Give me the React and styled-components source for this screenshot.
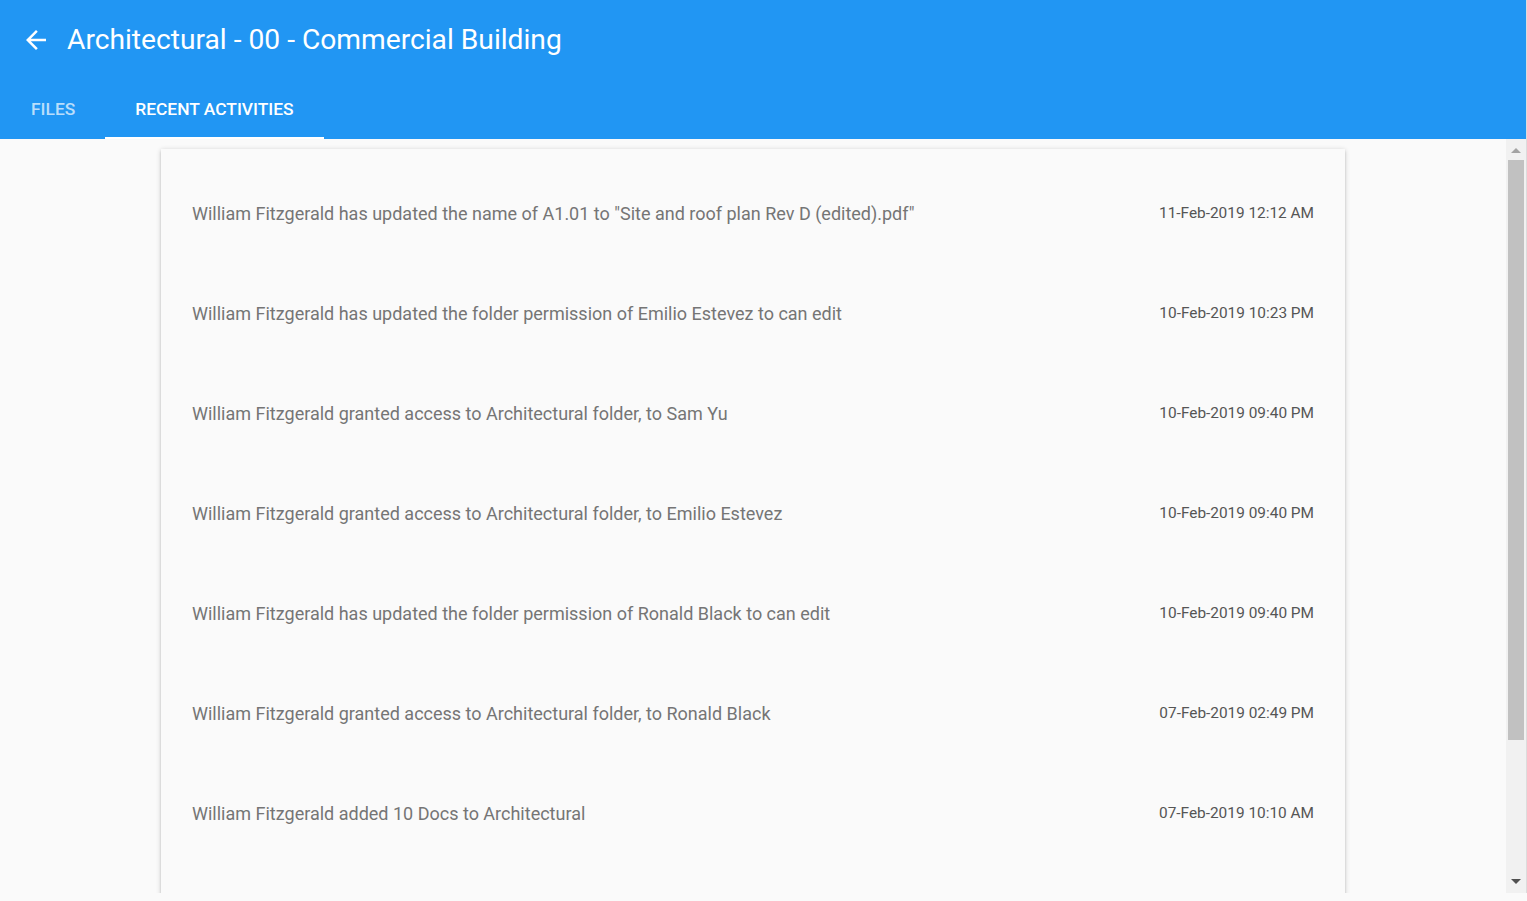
import React, { useState } from "react";
import styled, { createGlobalStyle } from "styled-components";

const GlobalStyle = createGlobalStyle`
  html, body {
    margin: 0;
    padding: 0;
    background: #fafafa;
    font-family: Roboto, "Noto Sans", Arial, sans-serif;
  }
  * { box-sizing: border-box; }
`;

const Page = styled.div`
  display: flex;
  flex-direction: column;
  height: 893px;
  border-right: 1px solid #dcdcdc;
  background: #fafafa;
`;

const Header = styled.header`
  background: #2196f3;
  color: #fff;
  display: flex;
  flex-direction: column;
`;

const Toolbar = styled.div`
  display: flex;
  align-items: center;
  height: 79px;
  padding: 0 0 0 21px;
  gap: 16px;
`;

const BackButton = styled.button`
  display: flex;
  align-items: center;
  justify-content: center;
  width: 30px;
  height: 30px;
  padding: 0;
  border: 0;
  background: transparent;
  cursor: pointer;
`;

const Title = styled.h1`
  margin: 0;
  font-size: 28.2px;
  font-weight: 400;
`;

const Tabs = styled.nav`
  display: flex;
  height: 60px;
  padding-left: 1px;
`;

const Tab = styled.button`
  height: 100%;
  padding: 0 30px;
  border: 0;
  background: transparent;
  font-family: inherit;
  font-size: 17.4px;
  font-weight: 500;
  text-transform: uppercase;
  color: ${(p) => (p.active ? "#fff" : "rgba(255,255,255,0.7)")};
  cursor: pointer;
  box-shadow: ${(p) => (p.active ? "inset 0 -2px 0 #fff" : "none")};
`;

const Body = styled.div`
  flex: 1;
  display: flex;
  min-height: 0;
`;

const Scroller = styled.main`
  flex: 1;
  overflow: hidden;
  padding: 10px 0;
`;

const Scrollbar = styled.div`
  width: 20px;
  display: flex;
  flex-direction: column;
  background: #f1f1f1;
`;

const ScrollButton = styled.div`
  height: 20px;
  display: flex;
  align-items: center;
  justify-content: center;
  padding: ${(p) => (p.up ? "2px 0 0" : "0 0 4px")};
`;

const Arrow = styled.span`
  width: 0;
  height: 0;
  border-left: 5px solid transparent;
  border-right: 5px solid transparent;
  ${(p) =>
    p.up
      ? "border-bottom: 5px solid #a3a3a3;"
      : "border-top: 5px solid #505050;"}
`;

const Track = styled.div`
  flex: 1;
  padding: 1px 2px 0;
`;

const Thumb = styled.div`
  background: #c1c1c1;
`;

const Card = styled.section`
  width: 1184px;
  margin: 0 auto;
  padding: 14px 31px;
  background: #fafafa;
  box-shadow: 0 1px 5px rgba(0, 0, 0, 0.2), 0 2px 2px rgba(0, 0, 0, 0.12);
`;

const Row = styled.div`
  display: flex;
  align-items: center;
  justify-content: space-between;
  height: 100px;
`;

const Message = styled.span`
  font-size: 18px;
  color: #757575;
`;

const Stamp = styled.span`
  font-size: 15.4px;
  color: #555;
  white-space: nowrap;
`;

const activities = [
  ['William Fitzgerald has updated the name of A1.01 to "Site and roof plan Rev D (edited).pdf"', "11-Feb-2019 12:12 AM"],
  ["William Fitzgerald has updated the folder permission of Emilio Estevez to can edit", "10-Feb-2019 10:23 PM"],
  ["William Fitzgerald granted access to Architectural folder, to Sam Yu", "10-Feb-2019 09:40 PM"],
  ["William Fitzgerald granted access to Architectural folder, to Emilio Estevez", "10-Feb-2019 09:40 PM"],
  ["William Fitzgerald has updated the folder permission of Ronald Black to can edit", "10-Feb-2019 09:40 PM"],
  ["William Fitzgerald granted access to Architectural folder, to Ronald Black", "07-Feb-2019 02:49 PM"],
  ["William Fitzgerald added 10 Docs to Architectural", "07-Feb-2019 10:10 AM"],
];

export default function App() {
  const [tab, setTab] = useState("recent");
  // the list runs past the bottom edge; thumb = visible share of the track
  const thumbHeight = 580;
  return (
    <Page>
      <GlobalStyle />
      <Header>
        <Toolbar>
          <BackButton aria-label="Back">
            <svg width="30" height="30" viewBox="0 0 24 24">
              <path fill="#fff" d="M20 11H7.83l5.59-5.59L12 4l-8 8 8 8 1.41-1.41L7.83 13H20v-2z" />
            </svg>
          </BackButton>
          <Title>Architectural - 00 - Commercial Building</Title>
        </Toolbar>
        <Tabs>
          <Tab active={tab === "files"} onClick={() => setTab("files")}>Files</Tab>
          <Tab active={tab === "recent"} onClick={() => setTab("recent")}>Recent Activities</Tab>
        </Tabs>
      </Header>
      <Body>
        <Scroller>
          <Card>
            {activities.map(([text, date], i) => (
              <Row key={i}>
                <Message>{text}</Message>
                <Stamp>{date}</Stamp>
              </Row>
            ))}
            <Row />
          </Card>
        </Scroller>
        <Scrollbar>
          <ScrollButton up>
            <Arrow up />
          </ScrollButton>
          <Track>
            <Thumb style={{ height: thumbHeight }} />
          </Track>
          <ScrollButton>
            <Arrow />
          </ScrollButton>
        </Scrollbar>
      </Body>
    </Page>
  );
}
